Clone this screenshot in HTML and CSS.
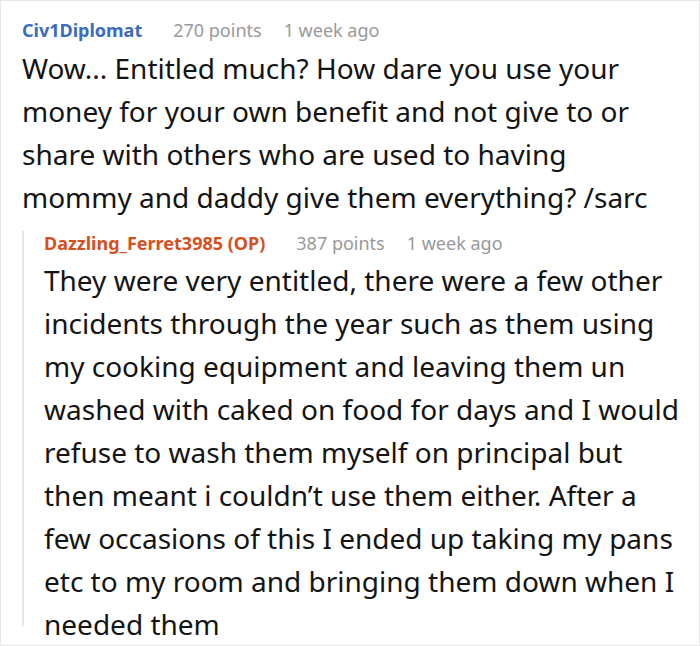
FILE: index.html
```html
<!DOCTYPE html>
<html>
<head>
<meta charset="utf-8">
<link rel="stylesheet" href="styles.css">
</head>
<body>
<div class="frame">
  <div class="comment">
    <div class="meta"><span class="author">Civ1Diplomat</span><span class="info">270 points</span><span class="info">1 week ago</span></div>
    <div class="text narrow">Wow... Entitled much? How dare you use your money for your own benefit and not give to or share with others who are used to having mommy and daddy give them everything? /sarc</div>
  </div>
  <div class="reply">
    <div class="meta"><span class="author op">Dazzling_Ferret3985 (OP)</span><span class="info">387 points</span><span class="info">1 week ago</span></div>
    <div class="text">They were very entitled, there were a few other incidents through the year such as them using my cooking equipment and leaving them un washed with caked on food for days and I would refuse to wash them myself on principal but then meant i couldn’t use them either. After a few occasions of this I ended up taking my pans etc to my room and bringing them down when I needed them</div>
  </div>
</div>
</body>
</html>
```
FILE: styles.css
```css
html, body {
  margin: 0;
  padding: 0;
  background: #fff;
}
.frame {
  width: 700px;
  height: 646px;
  box-sizing: border-box;
  border: 1px solid #e6e6e6;
  overflow: hidden;
  padding: 17px 14px 0 21px;
  font-family: "Noto Sans", "Open Sans", sans-serif;
  color: #141414;
}
.meta {
  font-size: 18px;
  line-height: 24px;
  display: flex;
  gap: 22px;
}
.author {
  font-weight: 700;
  color: #3a6bbf;
  margin-right: 9px;
}
.author.op {
  color: #d6501d;
}
.info {
  color: #999;
}
.text {
  font-size: 28px;
  line-height: 43px;
  margin-top: 5px;
}
.text.narrow {
  padding-right: 18px;
}
.reply {
  margin-top: 21px;
  border-left: 2px solid #e6e6e6;
  padding-left: 20px;
  height: 395px;
}
.reply .meta {
  margin-top: -9px;
}
.reply .text {
  margin-top: 4px;
}
```
